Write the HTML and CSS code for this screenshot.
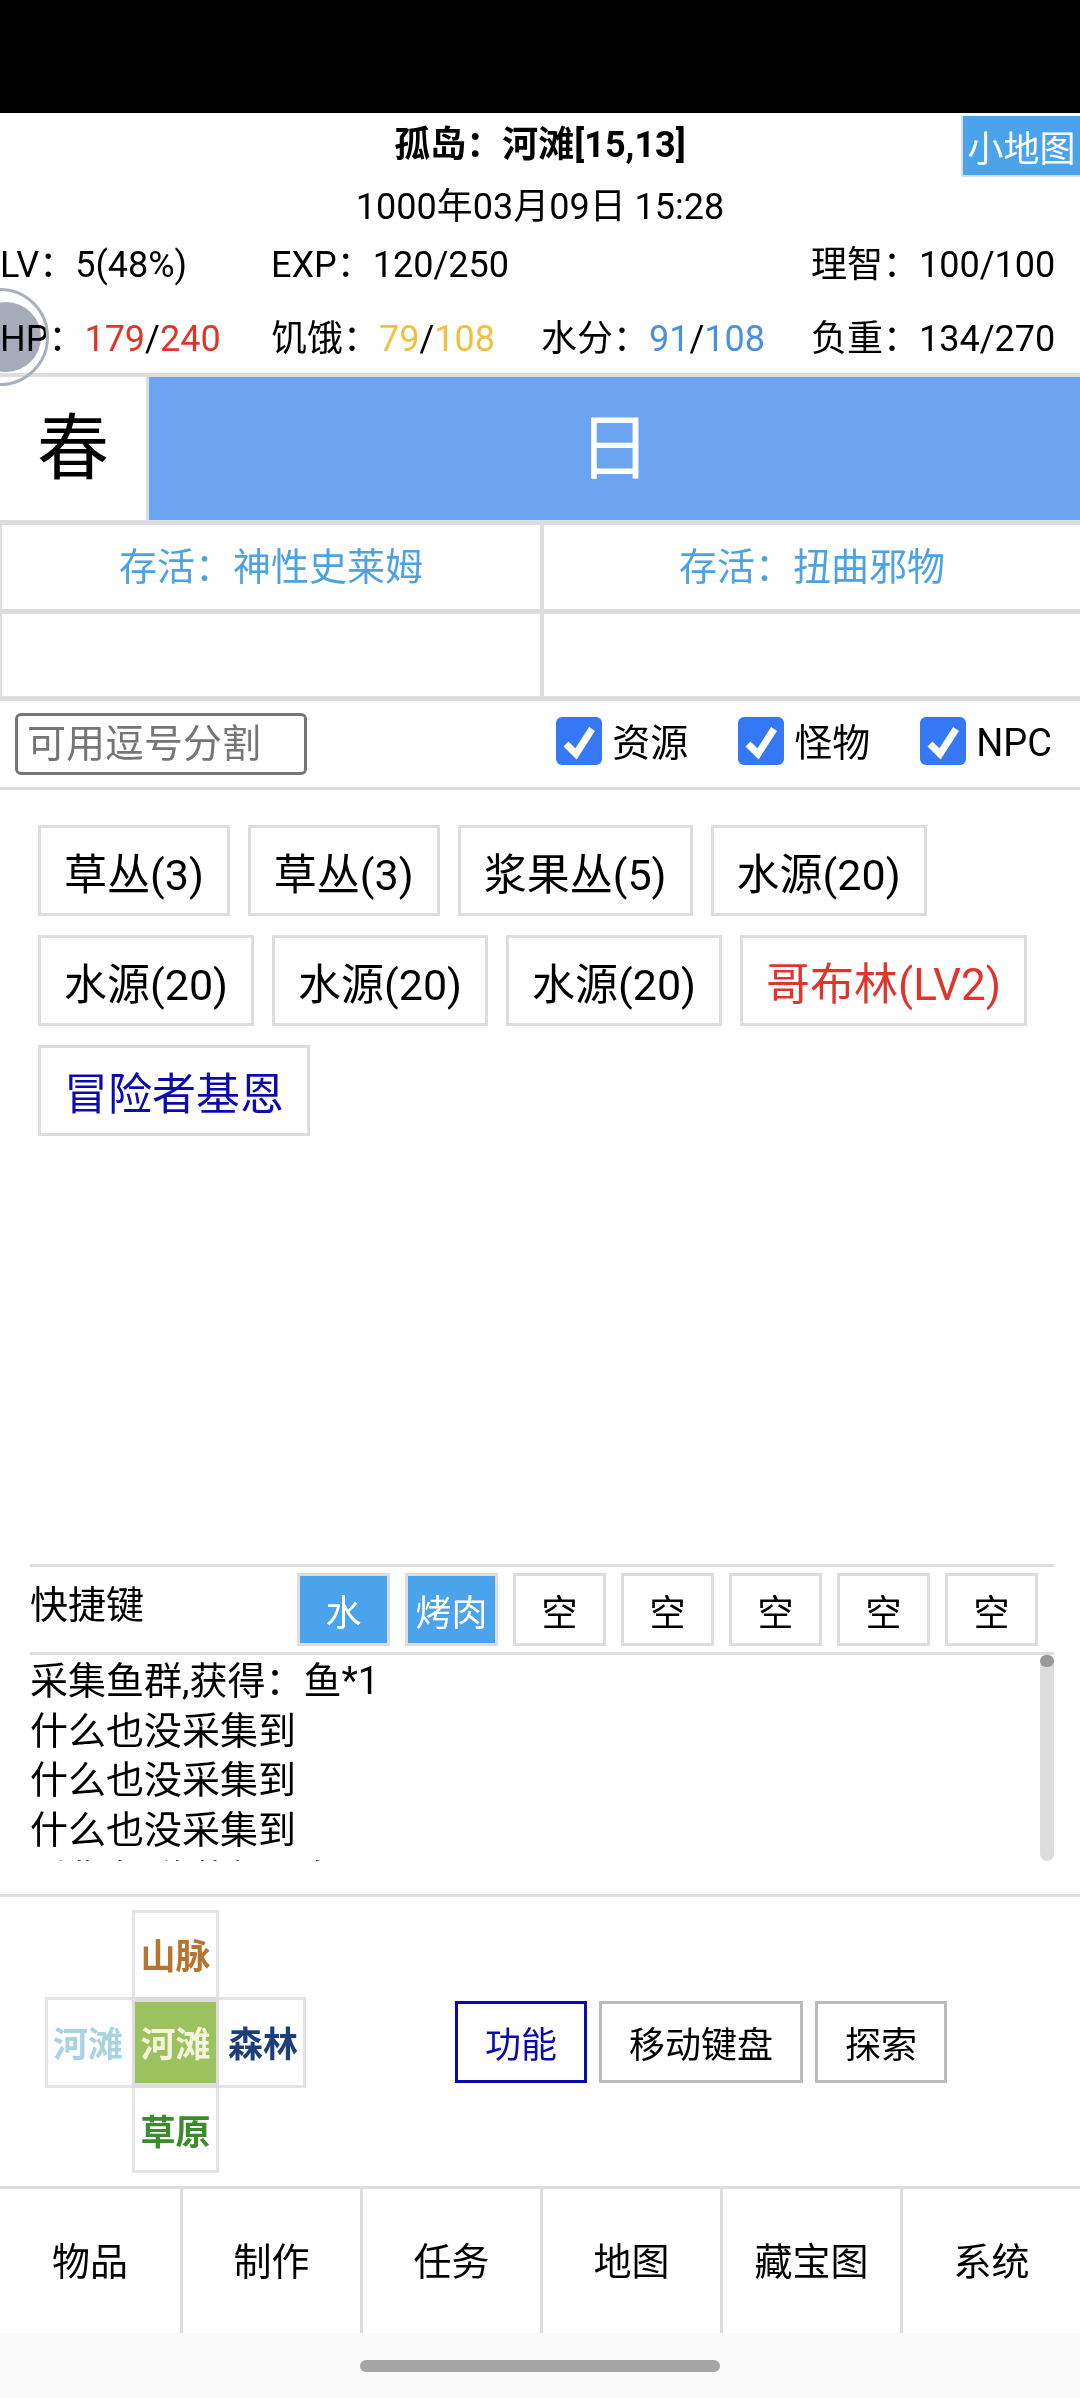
FILE: index.html
```html
<!DOCTYPE html>
<html lang="zh-CN">
<head>
<meta charset="utf-8">
<title>孤岛</title>
<link rel="stylesheet" href="styles.css">
</head>
<body>
<div class="app">
  <div class="statusbar"></div>
  <header class="head">
    <button class="minimap">小地图</button>
    <div class="title">孤岛：河滩[15,13]</div>
    <div class="date">1000年03月09日 15:28</div>
    <div class="stats">
      <div>LV：5(48%)</div>
      <div>EXP：120/250</div>
      <div></div>
      <div>理智：100/100</div>
      <div>HP：<span class="red">179</span>/<span class="red">240</span></div>
      <div>饥饿：<span class="yellow">79</span>/<span class="yellow">108</span></div>
      <div>水分：<span class="blue">91</span>/<span class="blue">108</span></div>
      <div>负重：134/270</div>
    </div>
    <div class="float-ball"><div class="float-core"></div></div>
  </header>
  <section class="season">
    <div class="season-name">春</div>
    <div class="season-day">日</div>
  </section>
  <section class="goals">
    <div class="goal">存活：神性史莱姆</div>
    <div class="goal">存活：扭曲邪物</div>
    <div class="goal"></div>
    <div class="goal"></div>
  </section>
  <section class="filter">
    <input class="search" type="text" placeholder="可用逗号分割">
    <div class="checks">
      <label class="check"><svg class="box" viewBox="0 0 46 48"><rect width="46" height="48" rx="6" fill="#3478f6"/><path d="M10 27 L20 37 L36 12" fill="none" stroke="#fff" stroke-width="7"/></svg>资源</label>
      <label class="check"><svg class="box" viewBox="0 0 46 48"><rect width="46" height="48" rx="6" fill="#3478f6"/><path d="M10 27 L20 37 L36 12" fill="none" stroke="#fff" stroke-width="7"/></svg>怪物</label>
      <label class="check"><svg class="box" viewBox="0 0 46 48"><rect width="46" height="48" rx="6" fill="#3478f6"/><path d="M10 27 L20 37 L36 12" fill="none" stroke="#fff" stroke-width="7"/></svg>NPC</label>
    </div>
  </section>
  <section class="targets">
    <button class="target">草丛(3)</button>
    <button class="target">草丛(3)</button>
    <button class="target">浆果丛(5)</button>
    <button class="target">水源(20)</button>
    <button class="target">水源(20)</button>
    <button class="target">水源(20)</button>
    <button class="target">水源(20)</button>
    <button class="target enemy">哥布林(LV2)</button>
    <button class="target npc">冒险者基恩</button>
  </section>
  <section class="shortcuts">
    <div class="shortcut-label">快捷键</div>
    <div class="slots">
      <button class="slot on">水</button>
      <button class="slot on">烤肉</button>
      <button class="slot">空</button>
      <button class="slot">空</button>
      <button class="slot">空</button>
      <button class="slot">空</button>
      <button class="slot">空</button>
    </div>
  </section>
  <section class="log">
    <div class="log-text">
      <div>采集鱼群,获得：鱼*1</div>
      <div>什么也没采集到</div>
      <div>什么也没采集到</div>
      <div>什么也没采集到</div>
      <div>采集鱼群,获得：鱼*1</div>
    </div>
    <div class="scroll"><div class="thumb"></div></div>
  </section>
  <section class="move">
    <div class="cross">
      <div class="cell c-top">山脉</div>
      <div class="cell c-left">河滩</div>
      <div class="cell c-mid">河滩</div>
      <div class="cell c-right">森林</div>
      <div class="cell c-bottom">草原</div>
    </div>
    <div class="actions">
      <button class="action active">功能</button>
      <button class="action">移动键盘</button>
      <button class="action">探索</button>
    </div>
  </section>
  <nav class="tabs">
    <div class="tab">物品</div>
    <div class="tab">制作</div>
    <div class="tab">任务</div>
    <div class="tab">地图</div>
    <div class="tab">藏宝图</div>
    <div class="tab">系统</div>
  </nav>
  <div class="gesture"><div class="pill"></div></div>
</div>
</body>
</html>
```
FILE: styles.css
```css
* { box-sizing: border-box; }
html, body { margin: 0; padding: 0; background: #fff; }
body, button, input { font-family: Roboto, "Noto Sans CJK SC", sans-serif; color: #000; }
button { margin: 0; background: #fff; cursor: pointer; }
.app { width: 1080px; height: 2398px; display: flex; flex-direction: column; overflow: hidden; }
.statusbar { height: 113px; background: #000; flex: none; }

.head { position: relative; height: 264px; flex: none; border-bottom: 4px solid #ddd; font-size: 36px; }
.minimap { position: absolute; right: 0; top: 3px; width: 119px; height: 61px; padding: 0; background: #4ba3ec; color: #fff; border: 0; border-left: 2px solid #ddd; border-bottom: 2px solid #ddd; font-size: 36px; }
.title { height: 64px; line-height: 64px; text-align: center; font-size: 36px; font-weight: 700; }
.date { margin-top: 4px; height: 53px; line-height: 52px; text-align: center; }
.stats { display: grid; grid-template-columns: 271px 270px 270px 269px; grid-auto-rows: 62px; row-gap: 12px; }
.stats > div { line-height: 62px; white-space: nowrap; }
.red { color: #e0352b; }
.yellow { color: #f0c040; }
.blue { color: #4a90e2; }
.float-ball { position: absolute; left: -49px; top: 175px; width: 98px; height: 98px; border-radius: 50%; border: 3px solid #a9b0bd; display: flex; align-items: center; justify-content: center; }
.float-core { width: 70px; height: 70px; margin-left: 11px; border-radius: 50%; background: #a5abb8; mix-blend-mode: multiply; flex: none; }

.season { display: flex; height: 143px; flex: none; }
.season-name { width: 149px; border-right: 3px solid #ddd; font-size: 72px; line-height: 143px; text-align: center; }
.season-day { flex: 1; background: #6ba4f0; color: #fff; font-size: 72px; line-height: 143px; text-align: center; }

.goals { display: grid; grid-template-columns: 544px 536px; grid-template-rows: 89px 87px; flex: none; background: #fff; }
.goal { border-top: 5px solid #ddd; color: #4da3e0; font-size: 38px; line-height: 84px; text-align: center; }
.goal:nth-child(odd) { border-left: 2px solid #ddd; border-right: 4px solid #ddd; }

.filter { height: 94px; flex: none; border-top: 5px solid #ddd; border-bottom: 3px solid #ddd; display: flex; align-items: center; justify-content: space-between; padding: 0 28px 0 15px; }
.search { width: 292px; height: 62px; border: 3px solid #767676; border-radius: 6px; padding: 0 9px; font-size: 39px; background: #fff; outline: none; }
.search::placeholder { color: #757575; opacity: 1; }
.checks { display: flex; gap: 50px; margin-bottom: 2px; }
.check { display: flex; align-items: center; gap: 10px; font-size: 38px; line-height: 48px; }
.box { width: 46px; height: 48px; flex: none; margin-bottom: 5px; }

.targets { height: 774px; flex: none; padding: 35px 40px 0 38px; display: flex; flex-wrap: wrap; align-content: flex-start; gap: 19px 18px; }
.target { height: 91px; border: 3px solid #ddd; padding: 0 23px; font-size: 43px; white-space: nowrap; }
.enemy { color: #e0352b; font-size: 44px; }
.npc { color: #0a0ab0; font-size: 44px; }

.shortcuts { margin: 0 26px 0 30px; height: 91px; flex: none; border-top: 3px solid #ddd; border-bottom: 3px solid #ddd; display: flex; justify-content: space-between; padding-right: 16px; padding-top: 6px; }
.shortcut-label { font-size: 38px; line-height: 64px; }
.slots { display: flex; gap: 15px; }
.slot { width: 93px; height: 73px; padding: 0; border: 3px solid #ddd; font-size: 36px; }
.slot.on { background: #4ba3ec; color: #fff; }

.log { margin: 0 26px 0 30px; height: 206px; flex: none; display: flex; justify-content: space-between; overflow: hidden; }
.log-text { padding-top: 2px; font-size: 38px; line-height: 49.5px; white-space: nowrap; }
.scroll { width: 14px; height: 206px; background: #ddd; border-radius: 7px; }
.thumb { height: 12px; border-radius: 7px; background: #999; }

.move { height: 295px; flex: none; margin-top: 33px; border-top: 3px solid #ddd; border-bottom: 3px solid #ddd; display: flex; align-items: center; padding-left: 45px; }
.cross { display: grid; grid-template-columns: repeat(3, 87px); grid-template-rows: 87px 91px 85px; font-size: 35px; font-weight: 700; text-align: center; }
.cell { display: flex; align-items: center; justify-content: center; border: 3px solid #e4e4e4; padding-bottom: 3px; }
.c-top { grid-column: 2; grid-row: 1; color: #b8732f; border-bottom: 0; }
.c-left { grid-column: 1; grid-row: 2; color: #a8d3e0; border-right: 0; padding-right: 4px; }
.c-mid { grid-column: 2; grid-row: 2; background: #9bc25e; color: #f4f4da; border-width: 5px 3px; border-color: #ddd; }
.c-right { grid-column: 3; grid-row: 2; color: #1a3f7a; border-left: 0; padding-left: 4px; }
.c-bottom { grid-column: 2; grid-row: 3; color: #3e8a2f; border-top: 0; padding-bottom: 0; }
.actions { display: flex; gap: 12px; margin-left: 149px; }
.action { height: 82px; padding: 0 27px; border: 3px solid #bbb; font-size: 36px; white-space: nowrap; }
.action.active { border-color: #0a0ab0; color: #0a0ab0; }

.tabs { display: grid; grid-template-columns: repeat(6, 1fr); height: 144px; flex: none; }
.tab { border-left: 3px solid #ddd; font-size: 38px; padding-top: 3px; line-height: 140px; text-align: center; }
.tab:first-child { border-left: 0; }
.gesture { flex: 1; background: #fafafa; display: flex; justify-content: center; padding-top: 27px; }
.pill { width: 360px; height: 12px; border-radius: 6px; background: #a6a6a6; }
```
